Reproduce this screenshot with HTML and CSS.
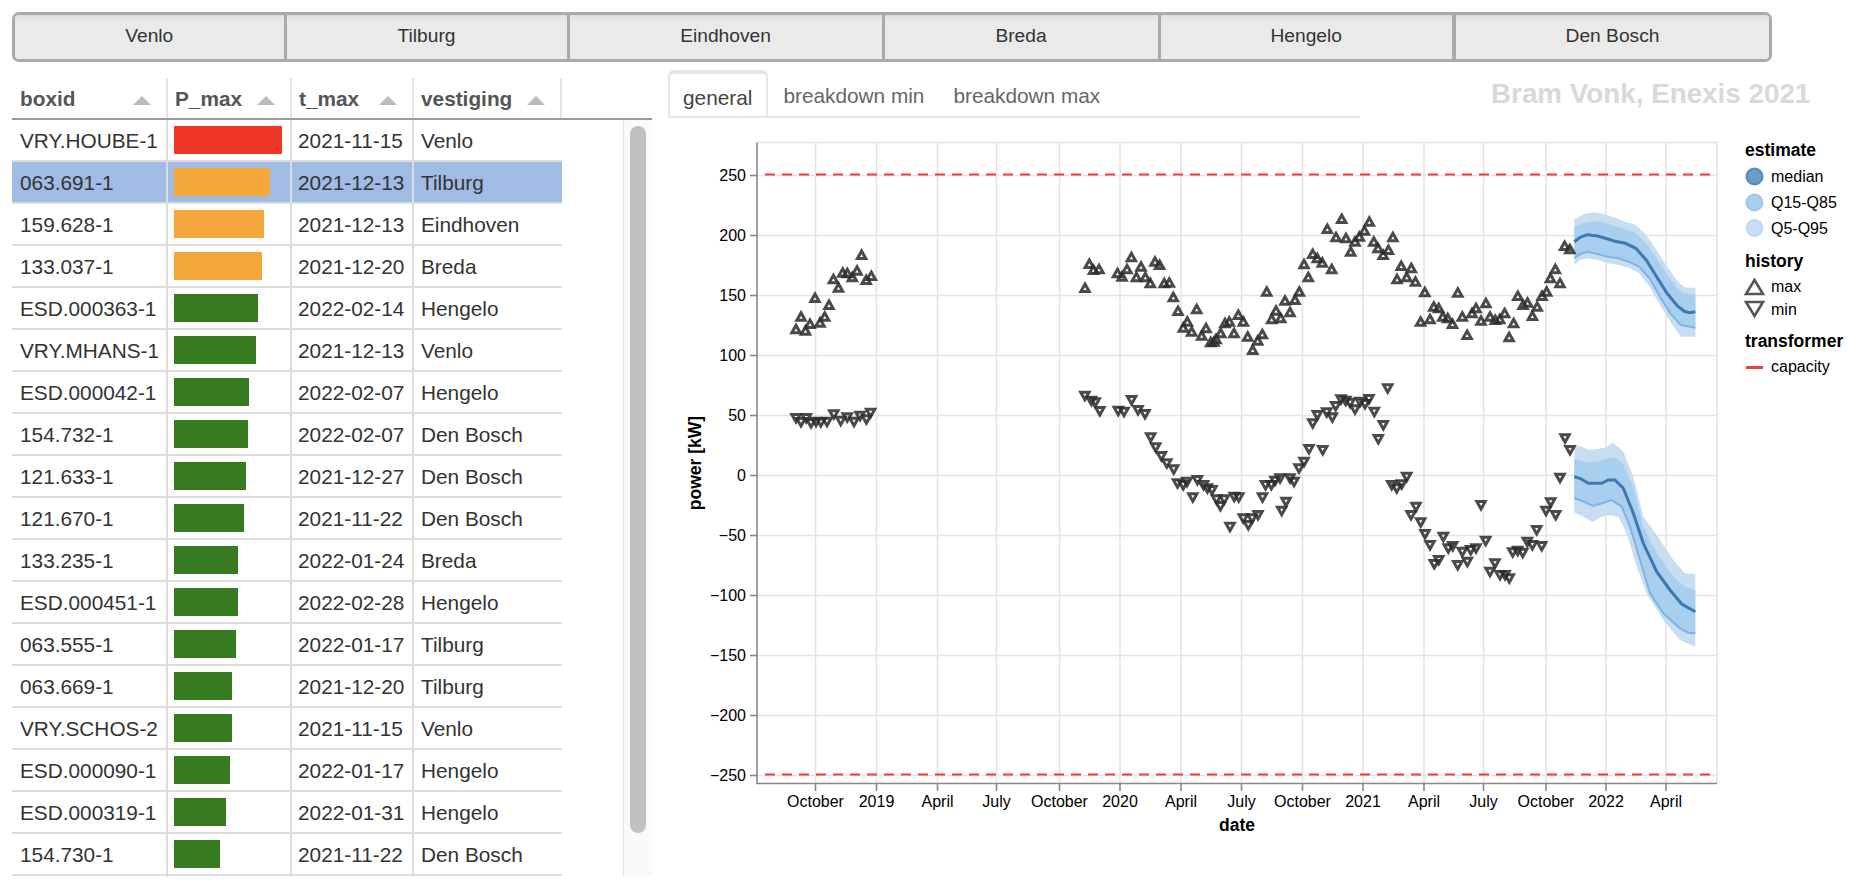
FILE: index.html
```html
<!DOCTYPE html>
<html lang="en">
<head>
    <meta charset="UTF-8">
    <title>Transformer overview</title>
    <link rel="stylesheet" href="styles.css">
</head>

<body>
    <!-- region buttons -->
    <div class="region-bar">
        <button class="region-btn">Venlo</button>
        <button class="region-btn">Tilburg</button>
        <button class="region-btn">Eindhoven</button>
        <button class="region-btn">Breda</button>
        <button class="region-btn">Hengelo</button>
        <button class="region-btn">Den Bosch</button>
    </div>

    <div class="main">
        <!-- table with the transformers -->
        <div class="table-panel">
            <div class="table-head">
                <table>
                    <tr>
                        <th class="col-id"><div class="th-inner">boxid<span class="sort"></span></div></th>
                        <th class="col-power"><div class="th-inner">P_max<span class="sort"></span></div></th>
                        <th class="col-date"><div class="th-inner">t_max<span class="sort"></span></div></th>
                        <th class="col-place"><div class="th-inner">vestiging<span class="sort"></span></div></th>
                    </tr>
                </table>
            </div>
            <div class="table-body">
                <table>
                    <tr><td class="col-id">VRY.HOUBE-1</td><td class="col-power"><div class="bar red" style="width: 108px"></div></td><td class="col-date">2021-11-15</td><td class="col-place">Venlo</td></tr>
                    <tr class="selected"><td class="col-id">063.691-1</td><td class="col-power"><div class="bar orange" style="width: 96px"></div></td><td class="col-date">2021-12-13</td><td class="col-place">Tilburg</td></tr>
                    <tr><td class="col-id">159.628-1</td><td class="col-power"><div class="bar orange" style="width: 90px"></div></td><td class="col-date">2021-12-13</td><td class="col-place">Eindhoven</td></tr>
                    <tr><td class="col-id">133.037-1</td><td class="col-power"><div class="bar orange" style="width: 88px"></div></td><td class="col-date">2021-12-20</td><td class="col-place">Breda</td></tr>
                    <tr><td class="col-id">ESD.000363-1</td><td class="col-power"><div class="bar green" style="width: 84px"></div></td><td class="col-date">2022-02-14</td><td class="col-place">Hengelo</td></tr>
                    <tr><td class="col-id">VRY.MHANS-1</td><td class="col-power"><div class="bar green" style="width: 82px"></div></td><td class="col-date">2021-12-13</td><td class="col-place">Venlo</td></tr>
                    <tr><td class="col-id">ESD.000042-1</td><td class="col-power"><div class="bar green" style="width: 75px"></div></td><td class="col-date">2022-02-07</td><td class="col-place">Hengelo</td></tr>
                    <tr><td class="col-id">154.732-1</td><td class="col-power"><div class="bar green" style="width: 74px"></div></td><td class="col-date">2022-02-07</td><td class="col-place">Den Bosch</td></tr>
                    <tr><td class="col-id">121.633-1</td><td class="col-power"><div class="bar green" style="width: 72px"></div></td><td class="col-date">2021-12-27</td><td class="col-place">Den Bosch</td></tr>
                    <tr><td class="col-id">121.670-1</td><td class="col-power"><div class="bar green" style="width: 70px"></div></td><td class="col-date">2021-11-22</td><td class="col-place">Den Bosch</td></tr>
                    <tr><td class="col-id">133.235-1</td><td class="col-power"><div class="bar green" style="width: 64px"></div></td><td class="col-date">2022-01-24</td><td class="col-place">Breda</td></tr>
                    <tr><td class="col-id">ESD.000451-1</td><td class="col-power"><div class="bar green" style="width: 64px"></div></td><td class="col-date">2022-02-28</td><td class="col-place">Hengelo</td></tr>
                    <tr><td class="col-id">063.555-1</td><td class="col-power"><div class="bar green" style="width: 62px"></div></td><td class="col-date">2022-01-17</td><td class="col-place">Tilburg</td></tr>
                    <tr><td class="col-id">063.669-1</td><td class="col-power"><div class="bar green" style="width: 58px"></div></td><td class="col-date">2021-12-20</td><td class="col-place">Tilburg</td></tr>
                    <tr><td class="col-id">VRY.SCHOS-2</td><td class="col-power"><div class="bar green" style="width: 58px"></div></td><td class="col-date">2021-11-15</td><td class="col-place">Venlo</td></tr>
                    <tr><td class="col-id">ESD.000090-1</td><td class="col-power"><div class="bar green" style="width: 56px"></div></td><td class="col-date">2022-01-17</td><td class="col-place">Hengelo</td></tr>
                    <tr><td class="col-id">ESD.000319-1</td><td class="col-power"><div class="bar green" style="width: 52px"></div></td><td class="col-date">2022-01-31</td><td class="col-place">Hengelo</td></tr>
                    <tr><td class="col-id">154.730-1</td><td class="col-power"><div class="bar green" style="width: 46px"></div></td><td class="col-date">2021-11-22</td><td class="col-place">Den Bosch</td></tr>
                    <tr><td class="col-id"></td><td class="col-power"></td><td class="col-date"></td><td class="col-place"></td></tr>
                </table>
                <div class="scroll-track"><div class="scroll-thumb"></div></div>
            </div>
        </div>

        <!-- tabs and chart -->
        <div class="chart-panel">
            <div class="tab-row">
                <div class="tabs">
                    <div class="tab active">general</div>
                    <div class="tab">breakdown min</div>
                    <div class="tab">breakdown max</div>
                </div>
                <div class="credit">Bram Vonk, Enexis 2021</div>
            </div>
            <!-- viewBox uses page coordinates -->
            <svg id="chart" class="chart" viewBox="668 118 1196 768" width="1196" height="768"></svg>
        </div>
    </div>

    <script src="chart.js"></script>
</body>
</html>
```

FILE: styles.css
```css
/* page */
html, body {
    height: 100%;
}
body {
    margin: 0;
    padding: 12px 0 0 12px;
    box-sizing: border-box;
    overflow: hidden;
    background-color: white;
    color: #333;
    font-family: "Liberation Sans", Arial, sans-serif;
}

/* region buttons */
.region-bar {
    width: 1760px;
    height: 50px;
    box-sizing: border-box;
    display: grid;
    grid-template-columns: 271.5px 283px 315px 276px 295.5px 313px;
    border: 3px solid #aaa;
    border-radius: 7px;
    overflow: hidden;
}
.region-btn {
    padding: 0 0 2px 0;
    border: none;
    border-right: 3px solid #aaa;
    background-color: #eaeaea;
    box-shadow: inset 0 6px 6px -6px #ccc;
    color: #333;
    font-family: inherit;
    font-size: 19.2px;
}
.region-btn:nth-child(5) {
    border-right-width: 4px;
}
.region-btn:last-child {
    border-right: none;
}

.main {
    display: flex;
    margin-top: 8px;
}

/* table */
.table-panel {
    width: 640px;
    margin-top: 8px;
    flex: none;
}
.table-panel table {
    width: 550px;
    table-layout: fixed;
    border-collapse: separate;
    border-spacing: 0;
    font-size: 20.8px;
}
.table-head {
    height: 42px;
    box-sizing: border-box;
    border-bottom: 2px solid #999;
}
.table-head th {
    height: 40px;
    padding: 1px 15px 0 7px;
    box-sizing: border-box;
    border-right: 2px solid #e2e2e2;
    color: #555;
    font-weight: bold;
    text-align: left;
}
.th-inner {
    display: flex;
    justify-content: space-between;
    align-items: center;
}
.sort {
    width: 0;
    height: 0;
    margin-top: 3px;
    border-left: 9px solid transparent;
    border-right: 9px solid transparent;
    border-bottom: 9px solid #bbb;
}
.col-id { width: 156px; }
.col-power { width: 124px; }
.col-date { width: 122px; }
.table-head .col-id { padding-left: 8px; }

.table-body {
    height: 757px;
    display: flex;
    justify-content: space-between;
    overflow: hidden;
}
.table-body table {
    align-self: flex-start;
}
.table-body td {
    height: 42px;
    padding: 1px 0 0 7px;
    box-sizing: border-box;
    border-bottom: 2px solid #ddd;
    border-right: 2px solid #ddd;
    white-space: nowrap;
    overflow: hidden;
}
.table-body .col-id { padding-left: 8px; }
.table-body .col-power { padding: 0 0 0 6px; }
.table-body .col-date { padding-left: 6px; }
.table-body .col-place { border-right: none; }
.selected td {
    background-color: #a0bbe4;
}
.bar {
    height: 28px;
}
.red { background-color: #ee3424; }
.orange { background-color: #f4a73b; }
.green { background-color: #387c22; }

.scroll-track {
    width: 29px;
    flex: none;
    box-sizing: border-box;
    padding: 6px 0 0 6px;
    background-color: #fafafa;
    border-left: 1px solid #e6e6e6;
}
.scroll-thumb {
    width: 16px;
    height: 707px;
    border-radius: 8px;
    background-color: #c1c1c1;
}

/* tabs */
.chart-panel {
    width: 1196px;
    margin-left: 16px;
    flex: none;
}
.tab-row {
    display: flex;
    align-items: center;
}
.tabs {
    width: 692px;
    height: 48px;
    box-sizing: border-box;
    display: flex;
    border-bottom: 2px solid #e6e6e6;
}
.tab {
    padding: 3px 14px 0 15px;
    line-height: 46px;
    color: #666;
    font-size: 20.8px;
}
.tab.active {
    padding: 0 14px 0 13px;
    height: 46px;
    line-height: 47px;
    box-sizing: border-box;
    border: 2px solid #e6e6e6;
    border-top-width: 4px;
    border-bottom: none;
    border-radius: 6px 6px 0 0;
    color: #444;
}
.credit {
    margin-left: 131px;
    color: #d9d9d9;
    font-size: 27.8px;
    font-weight: bold;
    white-space: nowrap;
}

/* chart */
.chart {
    display: block;
    font-family: "Liberation Sans", Arial, sans-serif;
}
.chart text {
    font-size: 16px;
    fill: #000;
}
.chart .title {
    font-size: 17.5px;
    font-weight: bold;
}
.grid { stroke: #e4e4e4; stroke-width: 1.6; }
.axis { stroke: #888; stroke-width: 1.6; }
.limit { stroke: #f33; stroke-width: 1.8; stroke-dasharray: 10 7; }
.mark { fill: none; stroke: #2a2a2a; stroke-width: 3; opacity: 0.85; }
.band-wide { fill: #c6ddf2; }
.band-mid { fill: #a9cfee; }
.edge { fill: none; stroke: #7fb4e2; stroke-width: 2; }
.median { fill: none; stroke: #3b79b0; stroke-width: 3; }
.sym-mark { fill: none; stroke: #555; stroke-width: 2.6; }
```

FILE: chart.js
```js
const svg = document.getElementById("chart");
const NS = "http://www.w3.org/2000/svg";

// add one svg element
function add(tag, attrs, text) {
    const el = document.createElementNS(NS, tag);
    for (const k in attrs) el.setAttribute(k, attrs[k]);
    if (text) el.textContent = text;
    svg.appendChild(el);
    return el;
}
function line(x1, y1, x2, y2, cls) {
    add("line", { x1, y1, x2, y2, class: cls });
}
function toPath(p) {
    return "M" + p.map(q => q.join(" ")).join("L");
}
function band(upper, lower, cls) {
    add("path", { d: toPath(upper.concat(lower.slice().reverse())) + "Z", class: cls });
}

const plotLeft = 757, plotRight = 1717, plotTop = 142.5, plotBottom = 783.5;
const yTicks = [250, 200, 150, 100, 50, 0, -50, -100, -150, -200, -250];
const xTicks = [[815.5, "October"], [876.5, "2019"], [937.5, "April"], [996.5, "July"], [1059.5, "October"],
    [1120, "2020"], [1181, "April"], [1241.5, "July"], [1302.5, "October"], [1363, "2021"], [1424, "April"],
    [1483.5, "July"], [1546, "October"], [1606, "2022"], [1666, "April"]];

// grid
line(plotLeft, plotTop, plotRight, plotTop, "grid");
line(plotRight, plotTop, plotRight, plotBottom, "grid");
yTicks.forEach(v => {
    const y = 475.5 - v * 1.2;
    line(plotLeft, y, plotRight, y, "grid");
    line(750, y, plotLeft, y, "axis");
    add("text", { x: 746, y: y + 5, "text-anchor": "end" }, String(v).replace("-", "\u2212"));
});
xTicks.forEach(t => {
    line(t[0], plotTop, t[0], plotBottom, "grid");
    line(t[0], plotBottom, t[0], 791, "axis");
    add("text", { x: t[0], y: 807, "text-anchor": "middle" }, t[1]);
});
line(plotLeft, plotTop, plotLeft, plotBottom + 0.8, "axis");
line(plotLeft, plotBottom, plotRight, plotBottom, "axis");
add("text", { x: 1237, y: 831, "text-anchor": "middle", class: "title" }, "date");
add("text", { x: 701, y: 463, "text-anchor": "middle", class: "title", transform: "rotate(-90 701 463)" }, "power [kW]");

// capacity
line(plotLeft + 8, 174.5, plotRight, 174.5, "limit");
line(plotLeft + 8, 774.5, plotRight, 774.5, "limit");

// forecast, upper
band([[1574.3,219.3],[1583.7,214.3],[1594.1,212.3],[1604.5,214],[1614.9,217.7],[1625.3,221.7],[1635.8,225],[1646.2,235],[1656.6,250],[1667,266.7],[1677.4,281],[1684.3,287.3],[1695.4,288]],
    [[1574.3,265],[1580.2,260],[1587.2,258.3],[1597.6,260],[1608,263.3],[1618.4,265],[1628.8,267.7],[1639.2,273.3],[1649.6,286.7],[1660,305],[1670.4,321.7],[1680.9,336.7],[1695.4,336.7]], "band-wide");
const upLow = [[1574.3,258.3],[1580.2,254],[1587.2,251.7],[1597.6,254],[1608,256.7],[1618.4,258.3],[1628.8,261.7],[1639.2,266.7],[1649.6,278.3],[1660,296.7],[1670.4,313.3],[1680.9,325],[1695.4,327.7]];
band([[1574.3,226.7],[1583.7,222.7],[1594.1,221],[1604.5,222.7],[1614.9,226],[1625.3,229.3],[1635.8,233.3],[1646.2,243.3],[1656.6,258.3],[1667,275],[1677.4,288.3],[1684.3,293.3],[1695.4,294]], upLow, "band-mid");
add("path", { d: toPath(upLow), class: "edge" });
add("path", { d: toPath([[1574.3,241.7],[1580.2,237.3],[1587.2,234.7],[1597.6,236],[1608,239],[1614.9,241.3],[1625.3,243.3],[1635.8,248.3],[1646.2,260],[1656.6,276.7],[1667,293.3],[1677.4,306],[1684.3,311.3],[1689.5,312.7],[1695.4,311.7]]), class: "median" });

// forecast, lower
band([[1574.3,446.7],[1580,446],[1588.3,450],[1596.7,449],[1605,447.7],[1613.3,442.7],[1623.3,451.7],[1633.3,476.7],[1643.3,516.7],[1656.7,535],[1673.3,560],[1685,573.3],[1695.3,574]],
    [[1574.3,512.3],[1583.3,516.7],[1592.7,522.3],[1600,517.3],[1608.3,515],[1618.3,516.7],[1626.7,533.3],[1636.7,566.7],[1646.7,593.3],[1663.3,620],[1680,640],[1695.3,647]], "band-wide");
const lowLow = [[1574.3,498.3],[1580,500],[1593.3,506],[1601.7,503.3],[1611.7,500],[1621.7,506.7],[1630,526.7],[1640,560],[1650,593.3],[1663.3,613.3],[1680,628.3],[1688.3,632.7],[1695.3,633.3]];
band([[1574.3,459.3],[1588.3,462.3],[1596.7,461.7],[1605,459.3],[1613.3,457.7],[1621.7,461.7],[1633.3,486.7],[1643.3,526.7],[1656.7,553.3],[1673.3,576.7],[1685,586.7],[1695.3,590]], lowLow, "band-mid");
add("path", { d: toPath(lowLow), class: "edge" });
add("path", { d: toPath([[1574.3,476.7],[1580,478.3],[1588.3,483.3],[1601.7,483.3],[1608.3,480],[1615,480],[1623.3,488.3],[1633.3,513.3],[1643.3,543.3],[1656.7,571.7],[1670,590],[1681.7,604],[1695.3,611.7]]), class: "median" });

// history, measured in page pixels
const maxPoints = [[796,329.3],[801,316.7],[805.5,330.7],[810,324],[815,298],[820,322.7],[824.7,316.7],[829,305],[833.4,279.3],[838.5,287.7],[842.7,272.7],[847.3,273.3],[852.3,277.3],[857,270.7],[861.6,255],[866.2,280],[871.3,276],
[1085,288],[1089.3,264],[1093.5,270],[1099,269.3],[1117.5,273.3],[1122,276.7],[1127,269.3],[1131.4,257.3],[1136.4,277.3],[1141,266.7],[1145.3,277.3],[1150.3,283.3],[1155,261.7],[1159.6,265],[1164.2,283.3],[1169.3,282.7],
[1173.3,297.3],[1178,311],[1196.7,309.3],[1183.3,327.7],[1187.3,321.7],[1191.7,331.7],[1201.7,335.7],[1206,328.3],[1210.7,342.3],[1214,341.7],[1216,339.3],[1220.7,333.3],[1225,323.3],[1229.3,321.7],[1234,333.3],[1238.3,315],[1243.3,321.7],[1247.7,336.7],[1252.7,350],[1257.7,340.7],[1262.3,334.3],[1266.7,291.7],[1271.7,319.3],[1276,310.7],[1280.7,318.3],[1285,300.7],[1290,312.3],[1295,300],[1299.3,291.7],[1304,264.3],[1308.3,277.3],[1312.7,254],[1317.3,258.3],[1322.3,262.7],[1331.7,269.3],[1327.3,229],[1336,237.3],[1341.7,219],[1346,238.3],[1350.7,251.7],[1355,241.7],[1359.3,236.7],
[1364.4,230.7],[1369.3,221.7],[1373.8,241.7],[1378,248.3],[1383.2,255],[1388.4,250],[1392.9,237.3],[1401.2,266],[1397,279.3],[1406.7,277.3],[1411.3,268.3],[1415.4,281.7],[1424.8,292.3],[1420.6,321.7],[1430,319.3],[1433.8,306.7],[1438.7,308.3],[1442.8,316.7],[1447.7,318.3],[1452.5,324],[1457.8,292.7],[1462.3,316.7],[1467.1,335],[1472,313.3],[1476,308.3],[1481,320.7],[1485.9,303.3],[1490,316.7],[1495.2,320],[1499.7,319.3],[1504.6,313.3],[1509.1,337.3],[1513.6,323.3],[1517.8,296],[1523,305],[1527.5,302.7],[1532.4,316],[1537.2,306.7],[1542,296],[1546.6,291.7],[1550.4,278.3],[1555.3,269.3],[1560,283.3],[1564.6,246],[1569.8,249.3]];

const minPoints = [[796,418],[801,422],[806.3,418],[811,423],[816,421.7],[820.8,422.3],[827,421.7],[833.8,414.3],[840.7,420.7],[847.2,417.3],[854,421.7],[860,415.7],[866.4,419.3],[870.6,412.7],
[1084.9,395.7],[1091.4,400.7],[1095.2,402.3],[1099.8,411],[1118.2,410.7],[1124,411.7],[1131.6,400],[1138,410],[1145,414],[1150.7,437.3],[1155.7,447.3],[1161.4,456],[1166.8,463.3],[1173.7,469.3],[1177.5,483.3],[1183.2,485],[1187,481.7],[1192.8,497.3],[1197.4,480],[1203.5,485],[1207.4,488.3],[1212,490],[1216.5,499.3],[1220.4,506],[1224.2,499.3],[1230,526.7],[1234.2,496.7],[1238.7,497.3],[1243.3,518.3],[1248.3,525],[1252.1,518.3],[1258,515],[1262.5,497.3],[1265.5,485],[1271.3,485],[1275,480.7],
[1281.7,510.7],[1286,501.7],[1280,478.3],[1290,478.3],[1294,481.7],[1299,468.3],[1304,461.7],[1309,449],[1322.7,450],[1312.7,423.3],[1317.3,415],[1326.7,412.3],[1332.3,417.3],[1335.7,406],[1341,399.3],[1345.7,400.7],[1350,402.7],[1355,409.3],[1360,401.7],[1365,404],[1369,399],[1374.3,411.7],[1383.3,425],[1378.3,439],[1387.7,388.3],[1391.7,485],[1396.7,488.3],[1401.7,484.3],[1406.7,476.7],[1416,506.7],[1411,515],[1420.7,522.3],[1425,534],[1430,545],[1434.3,564],[1438.7,560],[1443.3,536.7],[1448.3,548.3],[1452.7,546],[1457.7,565],[1462.3,551.7],[1467.3,561.7],[1470.7,550],[1476,548.3],[1481,505],[1485.7,540.7],[1490,571.7],[1495,563.3],[1500,575],[1505,575],[1509.3,578.3],[1512.7,552.3],[1517.7,550.7],[1522.7,552.7],[1527.3,541.7],[1532.3,545],[1536.7,530],[1541.7,546],[1546,510.7],[1550.7,502.3],[1555.7,515],[1560,477.7],[1565,438.3],[1570,450]];

maxPoints.forEach(p => add("path", { d: `M${p[0]} ${p[1] - 4}l4.2 7.5h-8.4z`, class: "mark" }));
minPoints.forEach(p => add("path", { d: `M${p[0]} ${p[1] + 4}l4.2 -7.5h-8.4z`, class: "mark" }));

// legend
add("text", { x: 1745, y: 156, class: "title" }, "estimate");
add("circle", { cx: 1754.5, cy: 176.5, r: 8, fill: "#6b9ac4", stroke: "#4f88ba", "stroke-width": 2 });
add("text", { x: 1771, y: 182 }, "median");
add("circle", { cx: 1754.5, cy: 202.5, r: 8, fill: "#a9cfee", stroke: "#9cc7ea", "stroke-width": 2 });
add("text", { x: 1771, y: 208 }, "Q15-Q85");
add("circle", { cx: 1754.5, cy: 228, r: 8, fill: "#c6ddf2", stroke: "#bdd8f0", "stroke-width": 2 });
add("text", { x: 1771, y: 233.5 }, "Q5-Q95");
add("text", { x: 1745, y: 267, class: "title" }, "history");
add("path", { d: "M1754.5 280l8.5 14h-17z", class: "sym-mark" });
add("text", { x: 1771, y: 291.5 }, "max");
add("path", { d: "M1754.5 316l8.5 -14h-17z", class: "sym-mark" });
add("text", { x: 1771, y: 314.5 }, "min");
add("text", { x: 1745, y: 347, class: "title" }, "transformer");
add("path", { d: "M1746 367.5h17", stroke: "#ee3f3f", "stroke-width": 3 });
add("text", { x: 1771, y: 372 }, "capacity");
```
